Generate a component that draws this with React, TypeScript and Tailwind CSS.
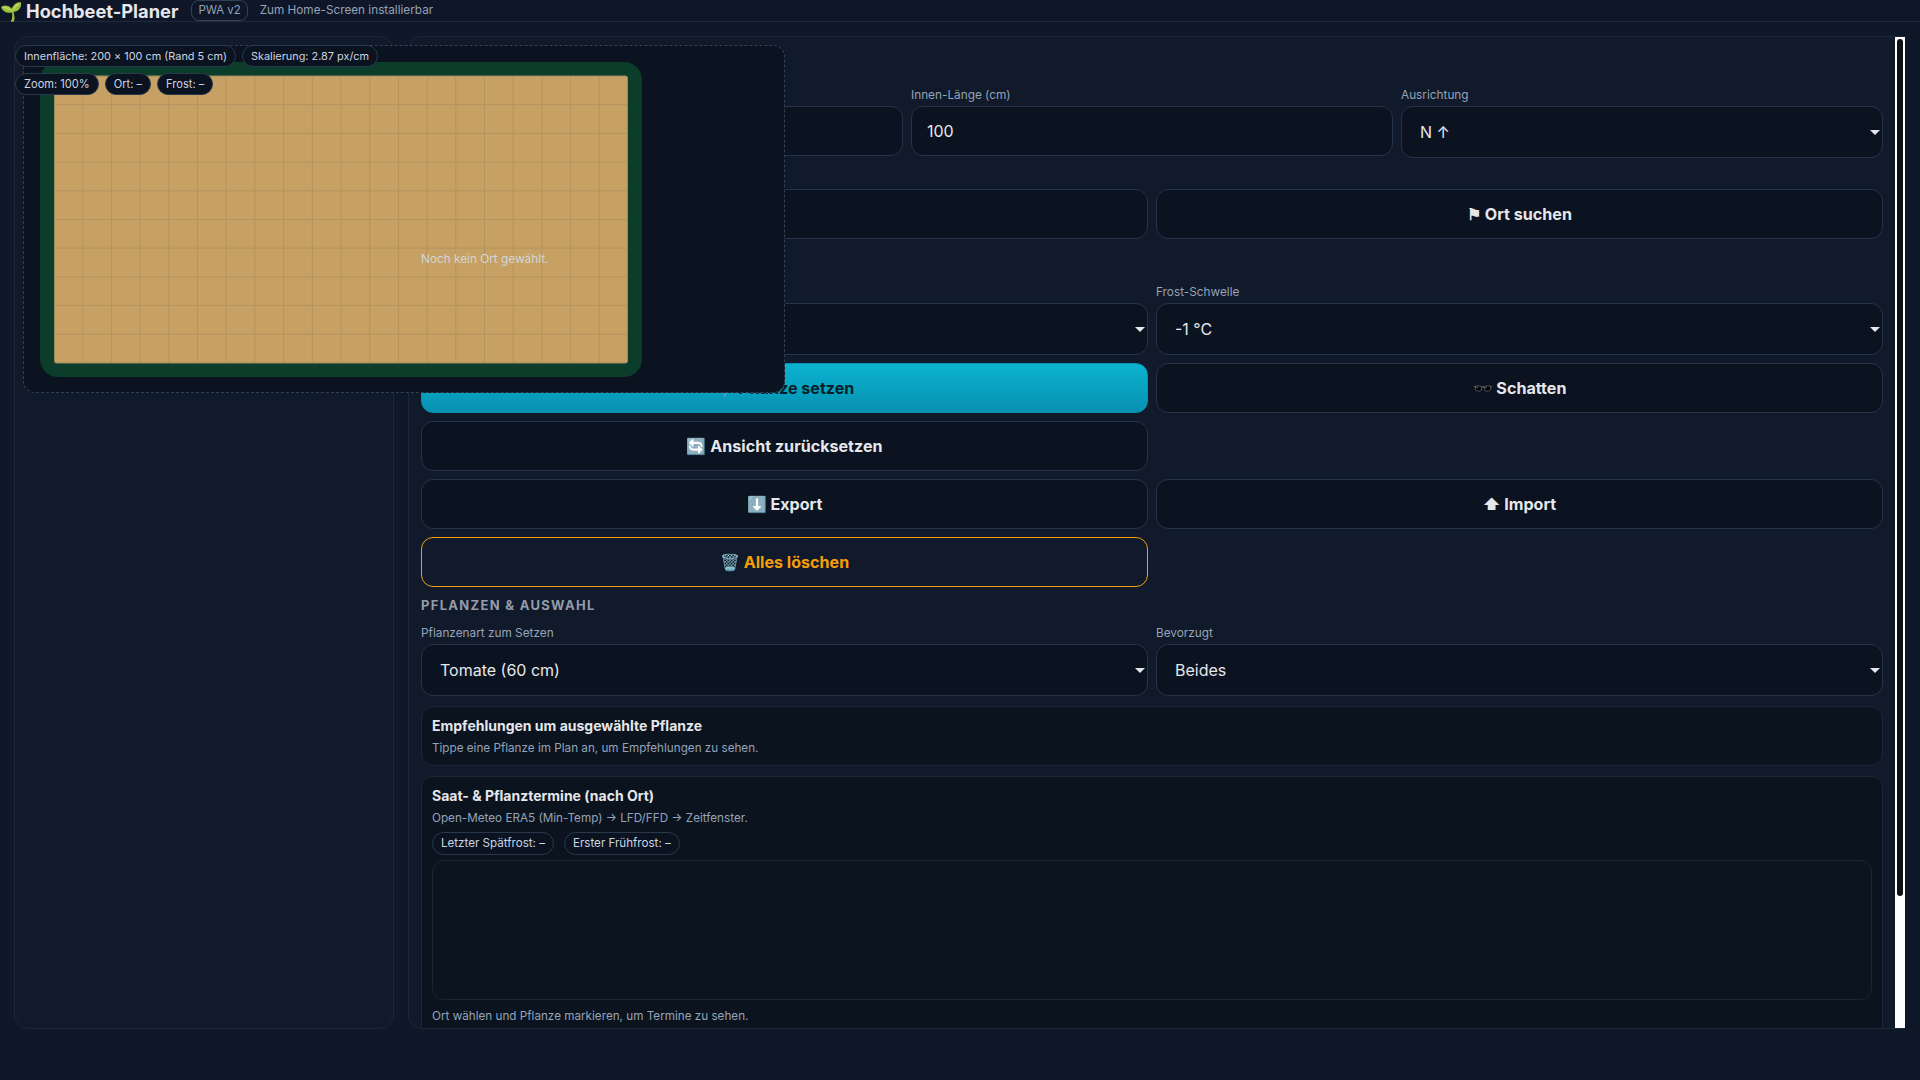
const labelCls = "block text-[11.8px] leading-[14px] text-[#94a3b8] mb-[4px]";
const inputCls = "w-full h-[50px] rounded-[12px] border border-[#263449] bg-[#0b1220] px-[15px] text-[16px] text-[#e5e7eb] outline-none";
const btnCls = "h-[50px] rounded-[12px] border border-[#263449] bg-[#0b1220] text-[16.1px] font-bold text-[#e5e7eb]";
const pillCls = "inline-flex items-center rounded-full border border-[#2a384d] bg-[#0b1220] whitespace-nowrap text-[#cbd5e1]";
const noteCls = "text-[11.7px] leading-[16px] text-[#94a3b8]";
const cardCls = "mt-[10px] rounded-[12px] border border-[#1c2638] bg-[#0b131f] px-[10px] pt-[9px]";
const cardTitleCls = "text-[14px] font-bold leading-[19px] text-[#e5e7eb]";

const cols = Array.from({ length: 19 }, (_, i) => (i + 1) * 28.7);
const rows = Array.from({ length: 9 }, (_, i) => (i + 1) * 28.7);

// Beet: 200 x 100 cm bei 2.87 px/cm, Rand 5 cm
function BedCanvas() {
  return (
    <svg width="602" height="315" viewBox="0 0 602 315" className="block">
      <rect x="0" y="0" width="602" height="315" rx="18" fill="#0c3c2a" />
      <rect x="14.5" y="14" width="573" height="287" rx="2" fill="#c7a164" stroke="#9c8a5c" strokeWidth="1" />
      {cols.map((x) => (
        <line key={x} x1={14 + x} y1="14" x2={14 + x} y2="301" stroke="#b39360" strokeWidth="1" />
      ))}
      {rows.map((y) => (
        <line key={y} x1="14.5" y1={14 + y} x2="587.5" y2={14 + y} stroke="#b39360" strokeWidth="1" />
      ))}
    </svg>
  );
}

function Field({ label, children }: any) {
  return (
    <div>
      <label className={`${labelCls} min-h-[14px]`}>{label}</label>
      {children}
    </div>
  );
}

function Select({ value }: { value: string }) {
  return (
    <div className="relative">
      <select className="block w-full h-[52px] appearance-none rounded-[12px] border border-[#263449] bg-[#0b1220] pl-[18px] pr-[18px] text-[16px] text-[#e5e7eb] outline-none">
        <option>{value}</option>
      </select>
      <svg width="10" height="5" viewBox="0 0 10 5" className="absolute right-[3px] top-[24px] pointer-events-none">
        <path d="M0 0h10L5 5z" fill="#e5e7eb" />
      </svg>
    </div>
  );
}

export default function App() {
  return (
    <div className="relative h-[1080px] overflow-hidden bg-[#0f1829] font-['Inter',sans-serif] text-[#e5e7eb]">
      <header className="flex items-center h-[22px] border-b border-[#1f2a3c] bg-[#0e1628]">
        <span className="text-[18.3px] leading-[22px] w-[26px] shrink-0">🌱</span>
        <h1 className="text-[18.3px] font-bold leading-[22px] text-[#e5e7eb]">Hochbeet-Planer</h1>
        <span className="ml-[13px] h-[21px] flex items-center rounded-[8px] border border-[#334155] px-[6px] text-[11.4px] text-[#94a3b8]">PWA v2</span>
        <span className="ml-[12px] text-[11.75px] text-[#94a3b8]">Zum Home-Screen installierbar</span>
      </header>

      <main className="grid grid-cols-[380px_1fr] gap-[14px] pl-[14px] pr-[15px] pt-[14px] h-[1007px]">
        <section className="rounded-[14px] border border-[#1c2638] bg-[#111a2a]" />

        <section className="relative min-h-0 overflow-hidden rounded-l-[14px] border-t border-l border-b border-[#1c2638] bg-[#111a2a] pl-[12px] pr-[22px]">
          <div className="pt-[51px]">
            <div className="grid grid-cols-3 gap-[8px] items-start">
              <Field label="Innen-Breite (cm)"><input className={inputCls} defaultValue="200" /></Field>
              <Field label="Innen-Länge (cm)"><input className={inputCls} defaultValue="100" /></Field>
              <Field label="Ausrichtung"><Select value="N ↑" /></Field>
            </div>

            <div className="grid grid-cols-2 gap-[8px] mt-[31px]">
              <input className={inputCls} />
              <button className={btnCls}>⚑ Ort suchen</button>
            </div>

            {/* Hinweis liegt im Original über dem Canvas */}
            <p className="relative z-10 mt-[12px] mb-[18px] text-[11.8px] leading-[16px] text-[#d3d6d6]">Noch kein Ort gewählt.</p>

            <div className="grid grid-cols-2 gap-[8px]">
              <Field label=""><Select value="" /></Field>
              <Field label="Frost-Schwelle"><Select value="-1 °C" /></Field>
              <button className="h-[50px] rounded-[12px] border border-[#0891b2] bg-linear-to-b from-[#0bb3d0] to-[#0891b2] text-[16.1px] font-bold text-[#04202a]">📍 Pflanze setzen</button>
              <button className={btnCls}>🕶️ Schatten</button>
              <button className={btnCls}>🔄 Ansicht zurücksetzen</button>
              <div />
              <button className={btnCls}>⬇️ Export</button>
              <button className={btnCls}>⬆ Import</button>
              <button className="h-[50px] rounded-[12px] border border-[#f59e0b] text-[16.1px] font-bold text-[#f59e0b]">🗑️ Alles löschen</button>
            </div>

            <div className="mt-[10px] mb-[13px] text-[13px] font-bold leading-[16px] tracking-[0.1em] uppercase text-[#949cab]">Pflanzen &amp; Auswahl</div>
            <div className="grid grid-cols-2 gap-[8px]">
              <Field label="Pflanzenart zum Setzen"><Select value="Tomate (60 cm)" /></Field>
              <Field label="Bevorzugt"><Select value="Beides" /></Field>
            </div>

            <div className={`${cardCls} h-[60px]`}>
              <h3 className={cardTitleCls}>Empfehlungen um ausgewählte Pflanze</h3>
              <p className={`mt-[5px] ${noteCls}`}>Tippe eine Pflanze im Plan an, um Empfehlungen zu sehen.</p>
            </div>

            <div className={`${cardCls} pb-[12px]`}>
              <h3 className={cardTitleCls}>Saat- &amp; Pflanztermine (nach Ort)</h3>
              <p className={`mt-[5px] ${noteCls}`}>Open-Meteo ERA5 (Min-Temp) → LFD/FFD → Zeitfenster.</p>
              <div className="mt-[6px] flex gap-[10px]">
                <span className={`${pillCls} h-[23px] px-[8px] text-[11.6px]`}>Letzter Spätfrost: –</span>
                <span className={`${pillCls} h-[23px] px-[8px] text-[11.6px]`}>Erster Frühfrost: –</span>
              </div>
              <div className="mt-[5px] h-[140px] rounded-[12px] border border-[#1c2638] bg-[#0b141f]" />
              <p className={`mt-[8px] ${noteCls}`}>Ort wählen und Pflanze markieren, um Termine zu sehen.</p>
            </div>
          </div>

          {/* Scrollleiste */}
          <div className="absolute right-0 top-0 bottom-0 w-[10px] bg-white">
            <div className="mx-[2px] mt-[2px] h-[857px] rounded-full bg-[#111111]" />
          </div>
        </section>
      </main>

      {/* Canvas-Overlay liegt über beiden Spalten */}
      <div className="absolute left-[23px] top-[45px] w-[762px] h-[348px] rounded-[12px] border border-dashed border-[#334155] bg-[#0b1220]">
        <div className="absolute left-[16px] top-[16px]">
          <BedCanvas />
        </div>
      </div>
      <div className="absolute left-[15px] top-[45px] flex flex-col gap-[6px]">
        <div className="flex gap-[6px]">
          <span className={`${pillCls} h-[22px] px-[8px] text-[10.9px]`}>Innenfläche: 200 × 100 cm (Rand 5 cm)</span>
          <span className={`${pillCls} h-[22px] px-[8px] text-[10.9px]`}>Skalierung: 2.87 px/cm</span>
        </div>
        <div className="flex gap-[6px]">
          <span className={`${pillCls} h-[22px] px-[8px] text-[11.1px]`}>Zoom: 100%</span>
          <span className={`${pillCls} h-[22px] px-[8px] text-[11.1px]`}>Ort: –</span>
          <span className={`${pillCls} h-[22px] px-[8px] text-[11.1px]`}>Frost: –</span>
        </div>
      </div>
    </div>
  );
}
